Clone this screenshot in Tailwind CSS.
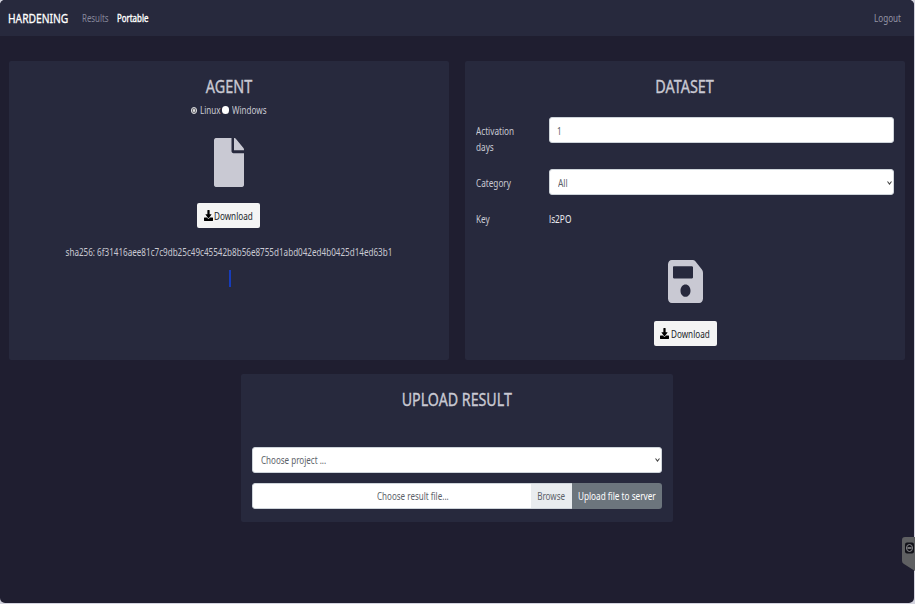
<!DOCTYPE html>
<html lang="en">
<head>
<meta charset="utf-8">
<title>Hardening - Portable</title>
<script src="https://cdn.jsdelivr.net/npm/@tailwindcss/browser@4"></script>
</head>
<body class="w-[915px] h-[604px] overflow-hidden bg-[#d3d3de] font-['Noto_Sans',sans-serif] text-[10.5px] leading-4 whitespace-nowrap">
<div class="relative w-[914px] h-[603px] overflow-hidden rounded-[5px] bg-[#1f1e30] text-[#c9c9d3]">
  <nav class="h-[36px] bg-[#27293d] flex items-center pl-[8px] pr-[13px]">
    <div class="w-[74px]"><div class="w-max origin-left scale-x-[.79] text-[13px] text-white [-webkit-text-stroke:.3px_white]">HARDENING</div></div>
    <div class="w-[35px]"><div class="w-max origin-left scale-x-[.75] text-[#85869a]">Results</div></div>
    <div class="w-[40px]"><div class="w-max origin-left scale-x-[.75] text-white [-webkit-text-stroke:.4px_white]">Portable</div></div>
    <div class="ml-auto w-max origin-right scale-x-[.77] text-[#9596a6]">Logout</div>
  </nav>
  <main>
    <div class="mt-[25px] flex gap-[16px] pl-[9px]">
      <section class="w-[440px] h-[299px] bg-[#27293d] rounded-[2px] flex flex-col items-center">
        <h2 class="mt-[13px] h-[24px] leading-6 origin-center scale-x-[.8] text-[18px] [-webkit-text-stroke:.35px_#c9c9d3]">AGENT</h2>
        <div class="mt-[4px] h-4 w-[76px] flex items-center">
          <i class="w-[6px] h-[7px] rounded-full border border-[#d8d8dc] bg-[#6b6b70] shrink-0 flex items-center justify-center"><i class="w-[2px] h-[3px] rounded-full bg-[#ddd]"></i></i>
          <div class="ml-[3px] w-[22px]"><div class="w-max origin-left scale-x-[.77]">Linux</div></div>
          <i class="w-[7px] h-[8px] rounded-full bg-white shrink-0"></i>
          <div class="ml-[3px] w-[35px]"><div class="w-max origin-left scale-x-[.77]">Windows</div></div>
        </div>
        <svg class="mt-[20px] w-[30px] h-[49px]" viewBox="0 0 384 512" preserveAspectRatio="none" fill="#c9c9d3"><path d="M224 136V0H24C10.700 0 0 10.700 0 24v464c0 13.300 10.700 24 24 24h336c13.300 0 24-10.700 24-24V160H248c-13.200 0-24-10.800-24-24zm160-14.100v6.100H256V0h6.100c6.400 0 12.500 2.500 17 7l97.900 98c4.500 4.500 7 10.600 7 16.900z"/></svg>
        <button class="mt-[16px] mr-px w-[63px] h-[25px] rounded-[2px] bg-[#f4f4f4] text-[#212529] flex items-center pl-[7px]">
          <svg class="w-[9px] h-[11px] shrink-0" viewBox="0 0 512 512" preserveAspectRatio="none" fill="#000"><path d="M216 0h80c13.300 0 24 10.700 24 24v168h87.700c17.800 0 26.700 21.500 14.100 34.100L269.700 378.300c-7.500 7.500-19.800 7.500-27.300 0L90.100 226.100c-12.600-12.600-3.700-34.100 14.100-34.100H192V24c0-13.300 10.700-24 24-24zm296 376v112c0 13.300-10.700 24-24 24H24c-13.300 0-24-10.700-24-24V376c0-13.300 10.700-24 24-24h146.700l49 49c20.100 20.100 52.500 20.100 72.600 0l49-49H488c13.300 0 24 10.700 24 24z"/></svg>
          <span class="ml-px w-max origin-left scale-x-[.775]">Download</span>
        </button>
        <div class="mt-[16px] origin-center scale-x-[.771]">sha256: 6f31416aee81c7c9db25c49c45542b8b56e8755d1abd042ed4b0425d14ed63b1</div>
        <div class="mt-[10px] ml-[2px] w-[2px] h-[17px] bg-[#173cba]"></div>
      </section>
      <section class="w-[440px] h-[299px] bg-[#27293d] rounded-[2px] flex flex-col items-center">
        <h2 class="mt-[13px] h-[24px] leading-6 origin-center scale-x-[.8] text-[18px] [-webkit-text-stroke:.35px_#c9c9d3]">DATASET</h2>
        <div class="mt-[19px] w-[418px] flex items-start">
          <div class="w-[73px] pt-[6px]"><div class="w-max origin-left scale-x-[.78]">Activation<br>days</div></div>
          <div class="w-[346px] h-[26px] rounded-[3px] bg-white border border-[#ced4da] text-[#5c6269] flex items-center pl-[7px] pt-px"><span class="origin-left scale-x-[.77]">1</span></div>
        </div>
        <div class="mt-[14px] w-[418px] flex items-start">
          <div class="w-[73px] pt-[6px]"><div class="w-max origin-left scale-x-[.78]">Category</div></div>
          <div class="w-[346px] h-[26px] rounded-[3px] bg-white border border-[#ced4da] text-[#5c6269] flex items-center pl-[8px] pr-[1px] pt-px"><span class="origin-left scale-x-[.8]">All</span>
            <svg class="ml-auto w-[5px] h-[4px]" viewBox="0 0 5 4" fill="none" stroke="#444" stroke-width="1.100"><path d="M.5 .5L2.500 3L4.500 .5"/></svg></div>
        </div>
        <div class="mt-[16px] w-[418px] flex items-start">
          <div class="w-[73px]"><div class="w-max origin-left scale-x-[.78]">Key</div></div>
          <div class="w-max origin-left scale-x-[.79] text-[#ebebf0]">ls2PO</div>
        </div>
        <svg class="mt-[33px] w-[35px] h-[43px] shrink-0" viewBox="0 0 448 448" preserveAspectRatio="none" fill="#c9c9d3"><path d="M433.900 97.900l-83.900-83.900A48 48 0 0 0 316.100 0H48C21.500 0 0 21.500 0 48v352c0 26.500 21.500 48 48 48h352c26.500 0 48-21.500 48-48V131.900a48 48 0 0 0-14.100-34zM224 384c-35.300 0-64-28.700-64-64s28.700-64 64-64 64 28.700 64 64-28.700 64-64 64zm96-304.500V180c0 6.600-5.400 12-12 12H76c-6.600 0-12-5.400-12-12V76c0-6.600 5.400-12 12-12h228.500c3.200 0 6.200 1.300 8.500 3.500l3.500 3.500A12 12 0 0 1 320 79.500z"/></svg>
        <button class="mt-[18px] w-[63px] h-[25px] shrink-0 rounded-[2px] bg-[#f4f4f4] text-[#212529] flex items-center pl-[6px]">
          <svg class="w-[9px] h-[11px] shrink-0" viewBox="0 0 512 512" preserveAspectRatio="none" fill="#000"><path d="M216 0h80c13.300 0 24 10.700 24 24v168h87.700c17.800 0 26.700 21.500 14.100 34.100L269.700 378.300c-7.500 7.500-19.800 7.500-27.300 0L90.100 226.100c-12.600-12.600-3.700-34.100 14.100-34.100H192V24c0-13.300 10.700-24 24-24zm296 376v112c0 13.300-10.700 24-24 24H24c-13.300 0-24-10.700-24-24V376c0-13.300 10.700-24 24-24h146.700l49 49c20.100 20.100 52.500 20.100 72.600 0l49-49H488c13.300 0 24 10.700 24 24z"/></svg>
          <span class="ml-[2px] w-max origin-left scale-x-[.775]">Download</span>
        </button>
      </section>
    </div>
    <section class="mt-[14px] ml-[241px] w-[432px] h-[148px] bg-[#27293d] rounded-[2px] flex flex-col items-center">
      <h2 class="mt-[13px] h-[24px] leading-6 origin-center scale-x-[.79] text-[18px] [-webkit-text-stroke:.35px_#c9c9d3]">UPLOAD RESULT</h2>
      <div class="mt-[36px] w-[410px] h-[26px] rounded-[3px] bg-white border border-[#ced4da] text-[#5c6269] flex items-center pl-[8px] pr-[1px]"><span class="origin-left scale-x-[.765]">Choose project ...</span>
        <svg class="ml-auto w-[5px] h-[4px]" viewBox="0 0 5 4" fill="none" stroke="#444" stroke-width="1.100"><path d="M.5 .5L2.500 3L4.500 .5"/></svg></div>
      <div class="mt-[10px] w-[410px] h-[26px] rounded-[3px] overflow-hidden text-[#5c6269] flex items-stretch leading-[24px]">
        <div class="w-[279px] pl-[124px] bg-white border border-r-0 border-[#ced4da] rounded-l-[3px]"><div class="w-max origin-left scale-x-[.765]">Choose result file...</div></div>
        <div class="w-[41px] bg-[#e9ecef] border-y border-[#ced4da] flex justify-center"><span class="scale-x-[.77]">Browse</span></div>
        <div class="w-[90px] bg-[#6c757d] text-white flex justify-center leading-[26px]"><span class="scale-x-[.78]">Upload file to server</span></div>
      </div>
    </section>
  </main>
</div>
<svg class="absolute left-[902px] top-[537px] w-[13px] h-[34px]" viewBox="0 0 13 34"><path d="M13 0H3Q0 0 0 3V24Q0 26 2 27L13 34Z" fill="#5f6062"/><rect x="3" y="5.500" width="9" height="11" rx="2" fill="#111118"/><ellipse cx="7.500" cy="11" rx="3" ry="3.500" fill="none" stroke="#8a8a8e"/><path d="M5.500 11h4" stroke="#aaa" stroke-width="1.300"/></svg>
</body>
</html>
